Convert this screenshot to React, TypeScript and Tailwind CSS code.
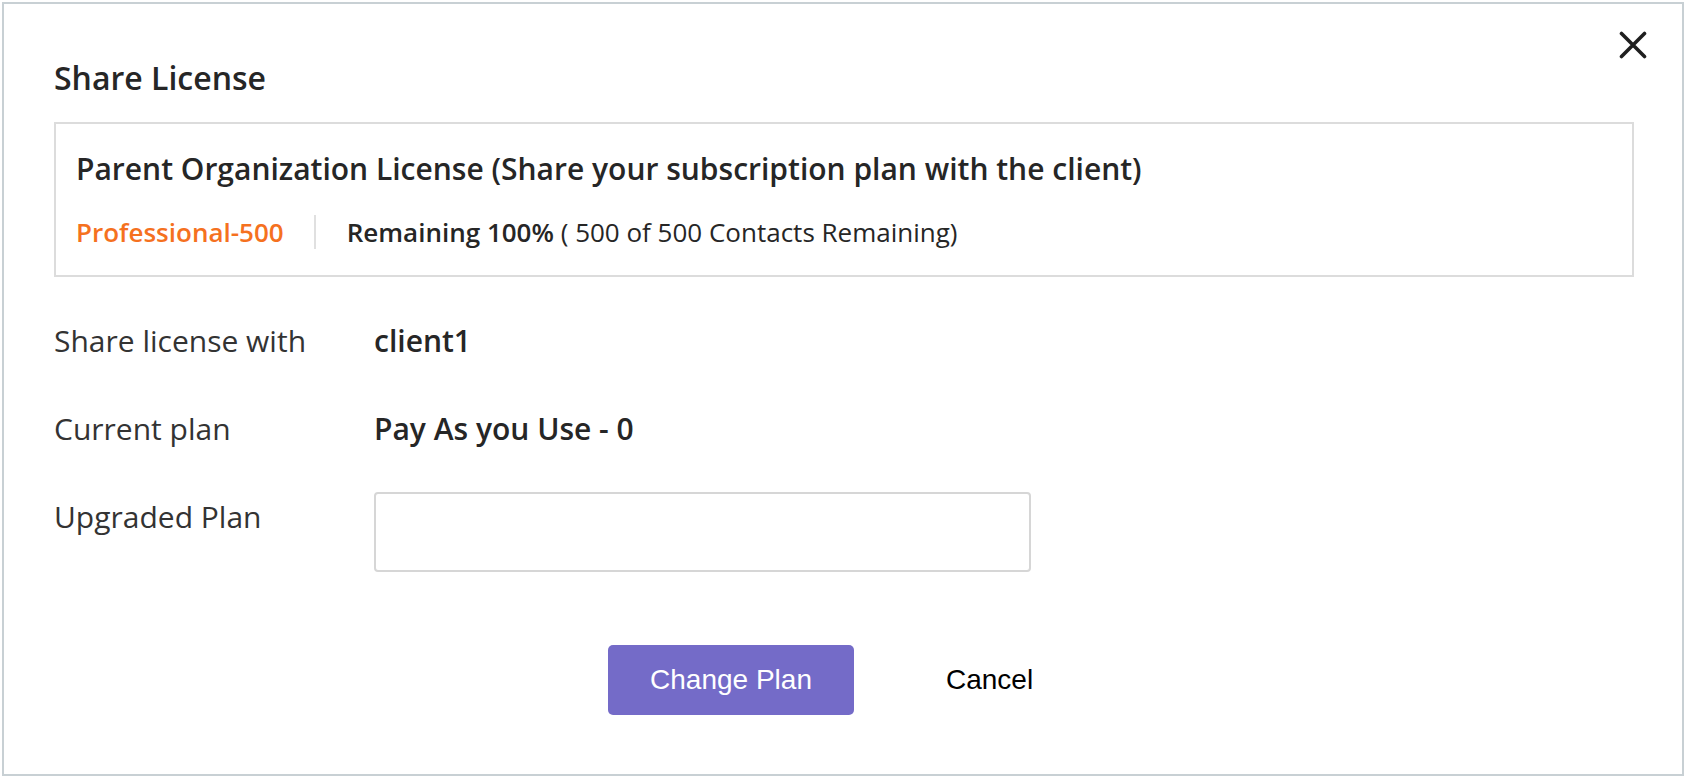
import React from "react";

const font = "font-['Open_Sans','Noto_Sans',sans-serif]";

const rows = [
  { label: "Share license with", value: "client1" },
  { label: "Current plan", value: "Pay As you Use - 0" },
];

const App: React.FC = () => {
  return (
    <div className={`w-[1686px] h-[778px] bg-white pt-[2px] pl-[2px] ${font}`}>
      <div className="relative w-[1682px] h-[774px] border-2 border-[#c8d0d4] bg-white pl-[50px] pr-[48px] pt-[52px]">
        <button className="absolute right-[34px] top-[26px] w-[30px] h-[30px] flex items-center justify-center text-[#1f1f1f]">
          <svg width="28" height="28" viewBox="0 0 28 28" fill="none" stroke="currentColor" strokeWidth="3.6" strokeLinecap="round">
            <path d="M2.5 2.5 L25.5 25.5 M25.5 2.5 L2.5 25.5" />
          </svg>
        </button>

        <h2 className="text-[32px] leading-[44px] font-semibold text-[#262626]">Share License</h2>

        <div className="mt-[22px] border-2 border-[#dcdcdc] h-[155px] pl-[20px] pt-[23px]">
          <div className="text-[30px] leading-[44px] font-semibold text-[#262626]">
            Parent Organization License (Share your subscription plan with the client)
          </div>
          <div className="mt-[23px] flex items-center text-[26px] leading-[36px]">
            <span className="text-[#f5711f] font-semibold">Professional-500</span>
            <span className="ml-[30px] mr-[31px] w-[2px] h-[34px] bg-[#e0e0e0]" />
            <span className="text-[#262626]">
              <span className="font-semibold">Remaining 100%</span> ( 500 of 500 Contacts Remaining)
            </span>
          </div>
        </div>

        <div className="mt-[44px] flex flex-col gap-[48px]">
          {rows.map(r => (
            <div key={r.label} className="flex items-center text-[30px] leading-[40px]">
              <span className="w-[320px] text-[#333333]">{r.label}</span>
              <span className="font-semibold text-[#262626]">{r.value}</span>
            </div>
          ))}
          <div className="flex items-start text-[30px] leading-[40px]">
            <span className="w-[320px] text-[#333333]">Upgraded Plan</span>
            <input className="-mt-[5px] w-[657px] h-[80px] border-2 border-[#d6d6d6] rounded-[4px] outline-none px-3" />
          </div>
        </div>

        <div className="mt-[73px] flex items-center pl-[554px] font-['Liberation_Sans',Arial,sans-serif] text-[28px]">
          <button className="w-[246px] h-[70px] rounded-[5px] bg-[#746bc8] text-white">Change Plan</button>
          <button className="ml-[92px] text-black">Cancel</button>
        </div>
      </div>
    </div>
  );
};

export default App;
